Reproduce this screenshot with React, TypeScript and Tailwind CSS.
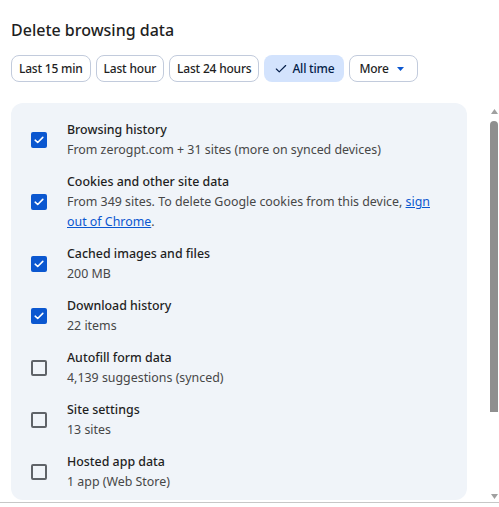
import { Check } from "lucide-react";

type Item = {
  title: string;
  detail: React.ReactNode;
  checked: boolean;
};

const items: Item[] = [
  {
    title: "Browsing history",
    detail: "From zerogpt.com + 31 sites (more on synced devices)",
    checked: true,
  },
  {
    title: "Cookies and other site data",
    detail: (
      <>
        From 349 sites. To delete Google cookies from this device,{" "}
        <a href="#" className="text-[#0b57d0] underline">
          sign out of Chrome
        </a>
        .
      </>
    ),
    checked: true,
  },
  { title: "Cached images and files", detail: "200 MB", checked: true },
  { title: "Download history", detail: "22 items", checked: true },
  { title: "Autofill form data", detail: "4,139 suggestions (synced)", checked: false },
  { title: "Site settings", detail: "13 sites", checked: false },
  { title: "Hosted app data", detail: "1 app (Web Store)", checked: false },
];

const ranges = ["Last 15 min", "Last hour", "Last 24 hours", "All time"];

function Box({ checked }: { checked: boolean }) {
  if (checked) {
    return (
      <span className="flex h-4 w-4 shrink-0 items-center justify-center rounded-[2px] bg-[#0b57d0]">
        <svg width="10" height="8" viewBox="0 0 10 8" fill="none">
          <path d="M1.2 4.2 3.7 6.5 8.8 1.4" stroke="white" strokeWidth="1.6" strokeLinecap="round" strokeLinejoin="round" />
        </svg>
      </span>
    );
  }
  return <span className="h-4 w-4 shrink-0 rounded-[2px] border-2 border-[#5f6368]" />;
}

export default function App() {
  return (
    <div
      className="h-[507px] w-[499px] overflow-hidden bg-white text-[#1f1f1f]"
      style={{ fontFamily: '"Noto Sans", "Open Sans", sans-serif' }}
    >
      <h1 className="pl-[11px] pt-[18px] text-[16px] leading-6 font-medium">Delete browsing data</h1>

      <div className="mt-[13px] flex gap-[5px] pl-[11px]">
        {ranges.map((r) => {
          const active = r === "All time";
          return (
            <button
              key={r}
              className={
                active
                  ? "flex h-[27px] items-center gap-[4px] rounded-lg bg-[#d3e3fd] px-[10px] text-[12px] font-medium tracking-[-0.2px] text-[#041e49]"
                  : "flex h-[27px] items-center rounded-lg border border-[#c2cbdc] px-[7px] text-[12px] font-medium tracking-[-0.2px]"
              }
            >
              {active && <Check size={14} strokeWidth={2} />}
              {r}
            </button>
          );
        })}
        <button className="flex h-[27px] items-center gap-[8px] rounded-lg border border-[#c2cbdc] pl-[9px] pr-[13px] text-[12px] font-medium tracking-[-0.2px]">
          More
          <svg width="7" height="4" viewBox="0 0 7 4">
            <path d="M0 0h7L3.5 4z" fill="#0b57d0" />
          </svg>
        </button>
      </div>

      <div className="mt-[21px] flex h-[400px] border-b border-[#c7c7c7]">
        <div className="ml-[11px] h-[397px] w-[456px] overflow-hidden rounded-xl bg-[#f0f4f9] pl-5 pr-[24px] pt-[17px]">
          <div className="flex flex-col gap-3">
            {items.map((it) => (
              <div key={it.title} className="flex items-center gap-5">
                <Box checked={it.checked} />
                <div className="text-[12.4px] leading-5">
                  <div className="font-medium text-[#1f1f1f]">{it.title}</div>
                  <div className="text-[#474747]">{it.detail}</div>
                </div>
              </div>
            ))}
          </div>
        </div>

        <div className="ml-auto flex w-[10px] flex-col items-center pt-[6px] pb-[3px]">
          <svg width="7" height="5" viewBox="0 0 7 5">
            <path d="M0 5 3.5 0 7 5z" fill="#a0a0a0" />
          </svg>
          <div className="mt-[7px] h-[291px] w-[8px] rounded-t-[4px] bg-[#8f8f8f]" />
          <div className="flex-1" />
          <svg width="7" height="5" viewBox="0 0 7 5">
            <path d="M0 0h7L3.5 5z" fill="#a0a0a0" />
          </svg>
        </div>
      </div>
    </div>
  );
}
